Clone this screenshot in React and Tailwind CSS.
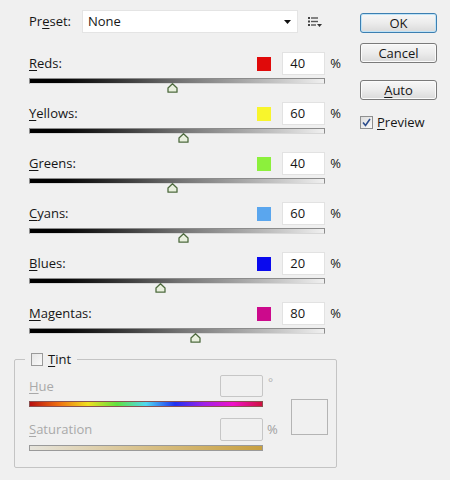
import React from "react";

const rows = [
  { name: "Reds", u: "R", rest: "eds:", color: "#e00a0a", value: 40 },
  { name: "Yellows", u: "Y", rest: "ellows:", color: "#f8f52c", value: 60 },
  { name: "Greens", u: "G", rest: "reens:", color: "#8cf03c", value: 40 },
  { name: "Cyans", u: "C", rest: "yans:", color: "#5aa6ee", value: 60 },
  { name: "Blues", u: "B", rest: "lues:", color: "#0a0aee", value: 20 },
  { name: "Magentas", u: "M", rest: "agentas:", color: "#cc0a8c", value: 80 },
];

function Thumb({ left }) {
  return (
    <svg
      className="absolute top-[4px]"
      style={{ left }}
      width="11"
      height="10"
      viewBox="0 0 11 10"
    >
      <path
        d="M5.5 0.8 L10 5 L10 9.2 L1 9.2 L1 5 Z"
        fill="#e9f0de"
        stroke="#4f6b3f"
        strokeWidth="1.3"
        strokeLinejoin="round"
      />
    </svg>
  );
}

function Row({ r }) {
  const frac = (r.value + 200) / 500;
  const left = frac * 296 - 5.5;
  return (
    <div className="pl-[15px] h-[50px]">
      <div className="flex items-center h-[23px] w-[312px]">
        <div className="flex-1 text-[#161616]">
          <span className="underline underline-offset-2">{r.u}</span>
          {r.rest}
        </div>
        <div className="w-[14px] h-[14px]" style={{ background: r.color }} />
        <div className="ml-[11px] w-[43px] h-[23px] bg-white border border-[#e2e2e2] flex items-center pl-[7px] text-[#161616]">
          {r.value}
        </div>
        <div className="ml-[5px] text-[#161616]">%</div>
      </div>
      <div className="relative mt-[3px] w-[296px] h-[6px] border border-[#8c8c8c] border-b-[#d8d8d8] bg-gradient-to-r from-black via-[#707070] to-[#f0f0f0]">
        <Thumb left={left} />
      </div>
    </div>
  );
}

function Button({ children, primary }) {
  return (
    <div
      className={
        "w-[77px] h-[20px] rounded-[3px] border flex items-center justify-center text-[#161616] bg-gradient-to-b from-[#f7f7f7] via-[#ececec] to-[#dadada] " +
        (primary
          ? "border-[#3c7fb1] shadow-[inset_0_0_0_1px_#bfe3f7]"
          : "border-[#7a7a7a] shadow-[inset_0_0_0_1px_#fbfbfb]")
      }
    >
      {children}
    </div>
  );
}

export default function App() {
  return (
    <div
      className="w-[450px] h-[480px] bg-[#f0f0f0] flex text-[13px] leading-none"
      style={{ fontFamily: '"Open Sans", "Noto Sans", sans-serif' }}
    >
      <div className="w-[346px] pl-[14px] pt-[10px]">
        <div className="pl-[15px] flex items-center h-[23px]">
          <div className="w-[53px] text-[#161616]">
            Pr<span className="underline underline-offset-2">e</span>set:
          </div>
          <div className="w-[216px] h-[23px] bg-white border border-[#e4e4e4] flex items-center pl-[5px] pr-[6px] text-[#161616]">
            <span className="flex-1">None</span>
            <svg width="7" height="4" viewBox="0 0 7 4">
              <path d="M0 0 H7 L3.5 4 Z" fill="#111" />
            </svg>
          </div>
          <svg className="ml-[10px]" width="14" height="10" viewBox="0 0 14 10">
            <rect x="0" y="0" width="2" height="2" fill="#444" />
            <rect x="3" y="0.3" width="7" height="1.4" fill="#555" />
            <rect x="0" y="3.5" width="2" height="2" fill="#444" />
            <rect x="3" y="3.8" width="7" height="1.4" fill="#555" />
            <rect x="0" y="7" width="2" height="2" fill="#444" />
            <rect x="3" y="7.3" width="5" height="1.4" fill="#555" />
            <path d="M9 7 H14 L11.5 10 Z" fill="#333" />
          </svg>
        </div>

        <div className="mt-[19px]">
          {rows.map((r) => (
            <Row key={r.name} r={r} />
          ))}
        </div>

        <fieldset className="mt-[1px] w-[323px] border border-[#c4c4c4] rounded-[2px] pb-[16px]">
          <legend className="ml-[10px] px-[6px] flex items-center">
            <span className="w-[12px] h-[13px] border border-[#9a9a9a] bg-gradient-to-br from-[#e6e6e6] to-[#fafafa]" />
            <span className="ml-[5px] text-[#161616]">
              <span className="underline underline-offset-2">T</span>int
            </span>
          </legend>
          <div className="flex items-start mt-[9px]">
            <div className="pl-[14px] w-[266px]">
              <div className="flex items-center h-[22px]">
                <div className="flex-1 text-[#a9a9a9]">
                  <span className="underline underline-offset-2">H</span>ue
                </div>
                <div className="w-[43px] h-[22px] rounded-[2px] border border-[#c6c6c6]" />
                <div className="ml-[5px] w-[13px] self-start mt-[2px] text-[#b0b0b0] text-[12px]">°</div>
              </div>
              <div className="mt-[4px] w-[234px] h-[6px] border border-[#8a5050] bg-[linear-gradient(to_right,#b81010,#f07010,#f0e020,#60e040,#50d8f0,#2030f0,#a020e8,#f010c8,#d01040)]" />
              <div className="mt-[11px] flex items-center h-[23px]">
                <div className="flex-1 text-[#a9a9a9]">
                  <span className="underline underline-offset-2">S</span>aturation
                </div>
                <div className="w-[43px] h-[23px] rounded-[2px] border border-[#c6c6c6]" />
                <div className="ml-[4px] w-[14px] text-[#a0a0a0]">%</div>
              </div>
              <div className="mt-[4px] w-[234px] h-[6px] border border-[#9a9a9a] bg-[linear-gradient(to_right,#e6e4dc,#d8c088,#c8a040)]" />
            </div>
            <div className="ml-[10px] mt-[24px] w-[37px] h-[36px] border border-[#b4b4b4]" />
          </div>
        </fieldset>
      </div>

      <div className="ml-[14px] pt-[13px] flex flex-col">
        <Button primary>OK</Button>
        <div className="mt-[10px]">
          <Button>Cancel</Button>
        </div>
        <div className="mt-[17px]">
          <Button>
            <span className="underline underline-offset-2">A</span>uto
          </Button>
        </div>
        <div className="mt-[16px] flex items-center">
          <span className="w-[13px] h-[13px] border border-[#8e8f8f] bg-gradient-to-br from-[#dcdcdc] to-[#fafafa] flex items-center justify-center">
            <svg width="9" height="9" viewBox="0 0 9 9">
              <path d="M1 4.5 L3.5 7.5 L8 1" fill="none" stroke="#2c4d8c" strokeWidth="1.6" />
            </svg>
          </span>
          <span className="ml-[4px] text-[#161616]">
            <span className="underline underline-offset-2">P</span>review
          </span>
        </div>
      </div>
    </div>
  );
}
